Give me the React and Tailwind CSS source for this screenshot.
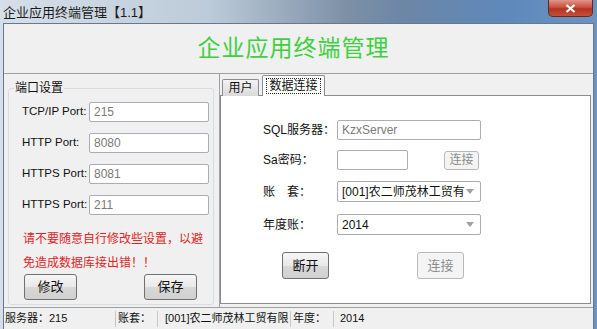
import React from "react";

const FONT = { fontFamily: '"Liberation Sans", "Noto Sans CJK SC", sans-serif' };

const Input = ({ value, w }) => (
  <div
    className={`${w} h-[20px] shrink-0 bg-white border border-[#abadb3] rounded-[2px] flex items-center px-[4px] text-[12px] text-[#7a7a7a]`}
  >
    {value}
  </div>
);

const Combo = ({ value }) => (
  <div className="w-[144px] h-[21px] bg-white border border-[#acacac] rounded-[2px] flex items-center justify-between pl-[4px] pr-[6px] text-[12px] text-[#111] whitespace-nowrap overflow-hidden">
    <span>{value}</span>
    <svg width="8" height="5" viewBox="0 0 8 5">
      <path d="M0 0h8L4 5z" fill="#a0a0a0" />
    </svg>
  </div>
);

const Btn = ({ label, className, disabled }) => (
  <button
    type="button"
    className={`${className} shrink-0 rounded-[3px] border text-[13px] flex items-center justify-center ${
      disabled
        ? "border-[#b5b9bc] bg-[#f4f4f4] text-[#8c8c8c]"
        : "border-[#707070] bg-[linear-gradient(#f6f6f6,#e8e8e8_50%,#d8d8d8_51%,#d0d0d0)] text-[#111]"
    }`}
  >
    {label}
  </button>
);

export default function App() {
  const ports = [
    ["TCP/IP Port:", "215"],
    ["HTTP Port:", "8080"],
    ["HTTPS Port:", "8081"],
    ["HTTPS Port:", "211"],
  ];

  return (
    <div
      className="w-[597px] h-[329px] flex flex-col overflow-hidden bg-[linear-gradient(90deg,#d6dfe9_0%,#bccbd9_35%,#7d90a6_58%,#6b86a6_68%,#5e89bb_85%,#6c93c0_100%)]"
      style={FONT}
    >
      {/* title bar */}
      <div className="h-[23px] shrink-0 relative flex items-start pl-[3px] pt-[3px]">
        <span className="text-[13px] text-[#1b1b1b]">企业应用终端管理【1.1】</span>
        <div className="absolute right-[4px] top-0 w-[45px] h-[17px] rounded-b-[5px] border border-t-0 border-[#5e2a24] bg-[linear-gradient(#e0968a,#c9503f_45%,#b23322_55%,#c5503c)] flex items-center justify-center">
          <svg width="11" height="9" viewBox="0 0 11 9">
            <path d="M1.5 1l8 7M9.5 1l-8 7" stroke="#fff" strokeWidth="2.2" />
          </svg>
        </div>
      </div>

      {/* client */}
      <div className="flex-1 min-h-0 mx-[3px] border-t border-x border-[#66788c] bg-[#f0f0f0] flex flex-col">
        <div className="h-[50px] shrink-0 border-b border-[#a0a0a0] flex items-center justify-center pr-[10px]">
          <span className="text-[23px] text-[#3fcf3f] tracking-[1px]">企业应用终端管理</span>
        </div>

        <div className="flex-1 min-h-0 flex overflow-hidden">
          {/* left: port settings */}
          <div className="w-[215px] shrink-0 pl-[4px] pt-[6px]">
            <fieldset className="w-[206px] border border-[#d5dce2] rounded-[3px] pl-[13px] pb-[4px]">
              <legend className="-ml-[8px] px-[1px] text-[12px] text-[#111] leading-[16px]">端口设置</legend>
              <div className="flex flex-col gap-[11px] pt-[6px]">
                {ports.map(([label, v], i) => (
                  <div key={i} className="flex items-center">
                    <span className="w-[67px] shrink-0 whitespace-nowrap text-[11.5px] text-[#111]">{label}</span>
                    <Input value={v} w="w-[120px]" />
                  </div>
                ))}
              </div>
              <div className="mt-[12px] pl-[1px] text-[12px] leading-[24px] text-[#e02424] whitespace-nowrap">
                <div>请不要随意自行修改些设置，以避</div>
                <div>免造成数据库接出错！！</div>
              </div>
              <div className="flex gap-[67px] pl-[2px] -mt-[1px]">
                <Btn label="修改" className="w-[53px] h-[26px]" />
                <Btn label="保存" className="w-[53px] h-[26px]" />
              </div>
            </fieldset>
          </div>

          {/* right: tabs */}
          <div className="flex-1 border-l border-[#a0a0a0] flex flex-col pr-[2px] pb-[3px]">
            <div className="h-[21px] shrink-0 flex items-end pl-[2px] gap-[3px]">
              <div className="relative w-[37px] h-[17px] -mb-[1px] border border-b-0 border-[#898c95] rounded-t-[2px] bg-[linear-gradient(#f3f3f3,#e6e6e6_50%,#dadada)] flex items-center justify-center text-[12px] text-[#111]">
                用户
              </div>
              <div className="relative z-10 w-[63px] h-[21px] -mb-[1px] border border-b-0 border-[#898c95] rounded-t-[2px] bg-white flex items-center justify-center">
                <span className="border border-dotted border-[#222] px-[2px] leading-[14px] text-[12px] text-[#111]">
                  数据连接
                </span>
              </div>
            </div>

            <div className="flex-1 border border-[#898c95] bg-white pl-[42px] pt-[24px]">
              <div className="flex items-center">
                <span className="w-[74px] text-[12px] text-[#111]">SQL服务器：</span>
                <Input value="KzxServer" w="w-[144px]" />
              </div>
              <div className="flex items-center mt-[10px]">
                <span className="w-[74px] text-[12px] text-[#111]">Sa密码：</span>
                <Input value="" w="w-[71px]" />
                <Btn label="连接" className="ml-[36px] w-[35px] h-[19px] !text-[12px]" disabled />
              </div>
              <div className="flex items-center mt-[11px]">
                <span className="w-[74px] text-[12px] text-[#111]">账　套：</span>
                <Combo value="[001]农二师茂林工贸有" />
              </div>
              <div className="flex items-center mt-[12px]">
                <span className="w-[74px] text-[12px] text-[#111]">年度账：</span>
                <Combo value="2014" />
              </div>
              <div className="flex mt-[17px] ml-[19px] gap-[88px]">
                <Btn label="断开" className="w-[47px] h-[27px]" />
                <Btn label="连接" className="w-[47px] h-[27px]" disabled />
              </div>
            </div>
          </div>
        </div>

        {/* status bar */}
        <div className="h-[22px] shrink-0 border-t border-[#a0a0a0] flex items-center text-[11px] text-[#111] whitespace-nowrap">
          <div className="w-[111px] pl-[1px]">服务器：215</div>
          <div className="w-px h-[16px] bg-[#c8c8c8]" />
          <div className="w-[41px] pl-[2px]">账套：</div>
          <div className="w-px h-[16px] bg-[#c8c8c8]" />
          <div className="w-[132px] pl-[7px] overflow-hidden">[001]农二师茂林工贸有限</div>
          <div className="w-px h-[16px] bg-[#c8c8c8]" />
          <div className="w-[42px] pl-[2px]">年度：</div>
          <div className="w-px h-[16px] bg-[#c8c8c8]" />
          <div className="pl-[6px]">2014</div>
        </div>
      </div>
    </div>
  );
}
